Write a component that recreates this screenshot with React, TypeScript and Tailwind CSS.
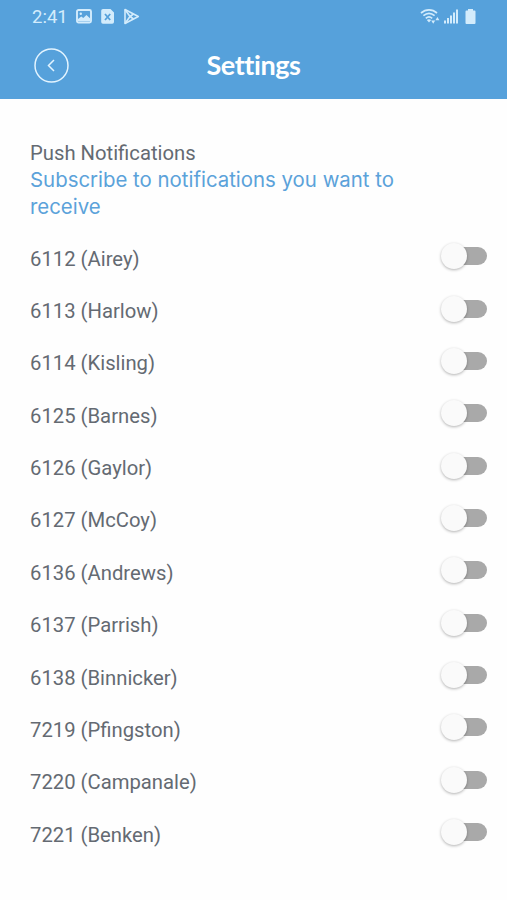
import { useState } from "react";

type Flight = { id: string; name: string };

const FLIGHTS: Flight[] = [
  { id: "6112", name: "Airey" },
  { id: "6113", name: "Harlow" },
  { id: "6114", name: "Kisling" },
  { id: "6125", name: "Barnes" },
  { id: "6126", name: "Gaylor" },
  { id: "6127", name: "McCoy" },
  { id: "6136", name: "Andrews" },
  { id: "6137", name: "Parrish" },
  { id: "6138", name: "Binnicker" },
  { id: "7219", name: "Pfingston" },
  { id: "7220", name: "Campanale" },
  { id: "7221", name: "Benken" },
];

function StatusBar() {
  return (
    <div className="flex h-8 items-center justify-between pl-8 pr-[31px] text-[#d3ecfc]">
      <div className="flex items-center">
        <span className="w-[44px] whitespace-nowrap pt-px text-[18.500px] leading-8">2:41</span>
        <svg width="16" height="15" viewBox="0 0 16 15" fill="none">
          <rect x="1" y="1" width="14" height="12.5" rx="1.5" stroke="currentColor" strokeWidth="1.9" />
          <path d="M2 12.300V10l3.300-2.500 2 1.600L10.400 6l3.800 3.500v2.800Z" fill="currentColor" />
          <circle cx="4.8" cy="4.8" r="1.2" fill="currentColor" />
        </svg>
        <svg className="ml-[9px]" width="14" height="15" viewBox="0 0 14 15">
          <path d="M2 0h7.5L13 3.5V13a1.8 1.8 0 0 1-1.8 1.8H2A1.8 1.8 0 0 1 .2 13V1.8A1.8 1.8 0 0 1 2 0Z" fill="currentColor" />
          <path d="m4 5 5.2 6M9.2 5 4 11" stroke="#56a1db" strokeWidth="1.8" />
        </svg>
        <svg className="ml-2" width="17" height="17" viewBox="0 0 17 17" fill="none" stroke="currentColor" strokeWidth="1.6" strokeLinejoin="round">
          <path d="M2 1.500v14L15.300 8.500Z" />
          <path d="m2 1.500 5 7-5 7M7 8.500l3.500-2.500M7 8.500l3.500 2.500" />
        </svg>
      </div>
      <div className="flex items-center">
        <svg width="20" height="17" viewBox="0 0 20 17" fill="none" stroke="currentColor" strokeWidth="1.7">
          <path d="M1 5C5.800.800 12.200.800 17 5" />
          <path d="M3.400 7.700C6.800 4.800 11.200 4.800 14.600 7.700" />
          <path d="M5.800 10.300c1.900-1.600 4.500-1.600 6.400 0" />
          <path d="m9 14.500-2.200-2.600c1.300-1 3.100-1 4.400 0Z" fill="currentColor" stroke="none" />
          <path d="m11.200 12.500 2 3.300 2-3.300ZM15.400 12.300l2-3.300 2 3.300Z" fill="currentColor" stroke="none" />
        </svg>
        <svg className="ml-1" width="15" height="15" viewBox="0 0 15 15" fill="currentColor">
          <path d="M0 11.500h2V14.500H0ZM3 9h2v5.500H3ZM6 6.500h2v8H6ZM9 3.500h2v11H9ZM12 .5h2v14h-2Z" />
        </svg>
        <svg className="ml-1.5" width="11" height="15" viewBox="0 0 11 15" fill="currentColor">
          <path d="M3 0h5v1.500h1.500a1 1 0 0 1 1 1V14a1 1 0 0 1-1 1h-8a1 1 0 0 1-1-1V2.500a1 1 0 0 1 1-1H3Z" />
        </svg>
      </div>
    </div>
  );
}

function Toggle({ on, label, onChange }: { on: boolean; label: string; onChange: () => void }) {
  return (
    <button type="button" role="switch" aria-checked={on} aria-label={label} onClick={onChange}
      className="relative flex h-[26px] w-[46px] items-center justify-end">
      <span className={`h-[18px] w-10 rounded-full ${on ? "bg-[#9ccaec]" : "bg-[#a9a9a9]"}`} />
      <span className={`absolute top-0 size-[26px] rounded-full shadow-[0_1px_3px_rgba(0,0,0,0.3)] ${on ? "right-0 bg-[#56a1db]" : "left-0 bg-[#fafafa]"}`} />
    </button>
  );
}

export default function App() {
  const [subscribed, setSubscribed] = useState<string[]>([]);

  function toggle(id: string) {
    setSubscribed((prev) => (prev.includes(id) ? prev.filter((x) => x !== id) : [...prev, id]));
  }

  return (
    <div className="h-[900px] w-full overflow-hidden bg-[#fefefe] font-['Roboto',sans-serif] text-[#646a72]">
      <header className="h-[99px] bg-[#56a1db]">
        <StatusBar />
        <div className="grid h-[66px] grid-cols-[1fr_auto_1fr] items-center px-[34px]">
          <button type="button" aria-label="Back" className="size-[35px] text-[#e3f4ff]">
            <svg width="35" height="35" viewBox="0 0 35 35" fill="none" stroke="currentColor" strokeWidth="1.5">
              <circle cx="17.500" cy="17.500" r="16.500" />
              <path d="m20 12-5.500 5.500L20 23" />
            </svg>
          </button>
          <h1 className="font-['Lato',sans-serif] text-[27px] font-bold leading-8 tracking-[-0.4px] text-white [font-variant-ligatures:none]">Settings</h1>
        </div>
      </header>

      <main className="pl-[30px] pr-5 pt-[41px]">
        <h2 className="text-[20.250px] leading-[26px]">Push Notifications</h2>
        <p className="w-[400px] font-['Inter',sans-serif] text-[20.400px] leading-[27px] text-[#5ba2da]">
          Subscribe to notifications you want to receive
        </p>
        <ul className="mt-[10px]">
          {FLIGHTS.map((f) => (
            <li key={f.id} className="flex h-[52.360px] items-center justify-between">
              <span className="pt-[5px] text-[20.250px] leading-6">{f.id} ({f.name})</span>
              <Toggle on={subscribed.includes(f.id)} label={f.name} onChange={() => toggle(f.id)} />
            </li>
          ))}
        </ul>
      </main>
    </div>
  );
}
